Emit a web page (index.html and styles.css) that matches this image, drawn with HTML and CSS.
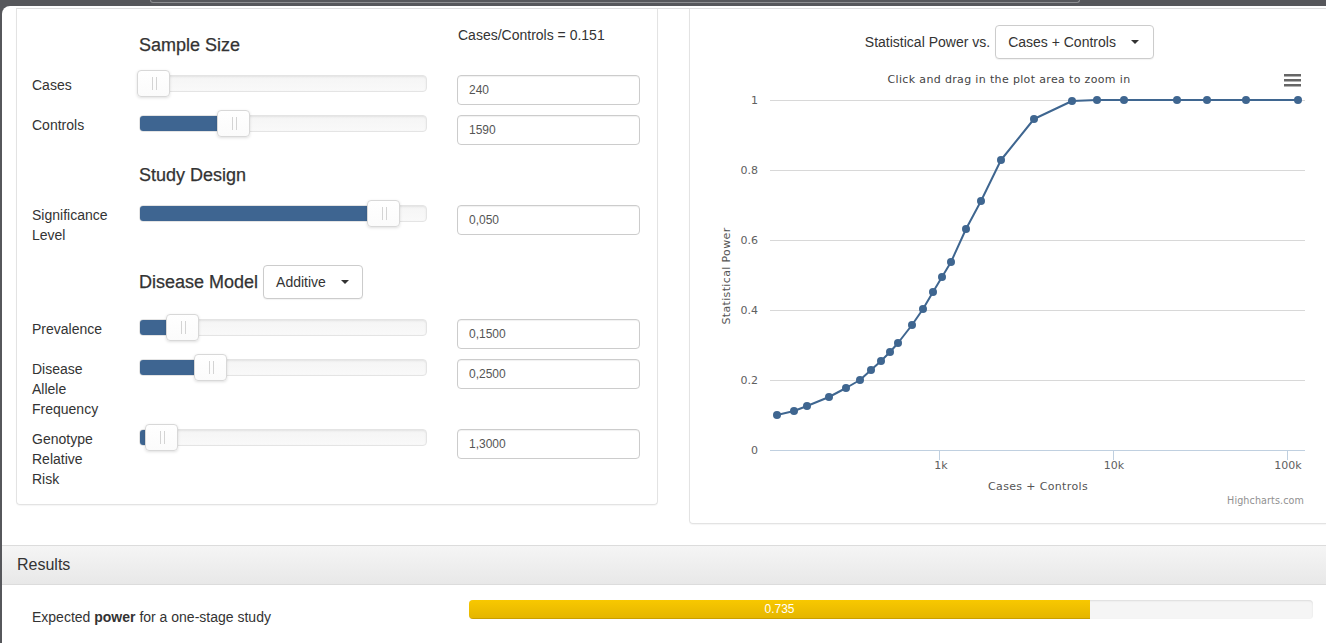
FILE: index.html
```html
<!DOCTYPE html>
<html lang="en">
<head>
<meta charset="utf-8">
<title>Power Calculator</title>
<link rel="stylesheet" href="styles.css">
</head>
<body>
<div class="chrome"><div class="chrome-tab"></div></div>
<div class="viewport">
  <div class="panels">
    <div class="well">
      <div class="head-row first">
        <h4 class="section-title">Sample Size</h4>
        <div class="ratio">Cases/Controls = 0.151</div>
      </div>
      <div class="row">
        <div class="lbl">Cases</div>
        <div class="slider"><div class="track"><div class="fill" style="width:10px"></div><div class="handle" style="left:-3px"></div></div></div>
        <input class="val" type="text" value="240" readonly>
      </div>
      <div class="row">
        <div class="lbl">Controls</div>
        <div class="slider"><div class="track"><div class="fill" style="width:93px"></div><div class="handle" style="left:77px"></div></div></div>
        <input class="val" type="text" value="1590" readonly>
      </div>

      <div class="head-row">
        <h4 class="section-title">Study Design</h4>
      </div>
      <div class="row">
        <div class="lbl">Significance Level</div>
        <div class="slider"><div class="track"><div class="fill" style="width:243px"></div><div class="handle" style="left:227px"></div></div></div>
        <input class="val" type="text" value="0,050" readonly>
      </div>

      <div class="head-row model">
        <div class="title-with-select">
          <h4 class="section-title">Disease Model</h4>
          <button class="select small" type="button">Additive <span class="caret"></span></button>
        </div>
      </div>
      <div class="row">
        <div class="lbl">Prevalence</div>
        <div class="slider"><div class="track"><div class="fill" style="width:42px"></div><div class="handle" style="left:26px"></div></div></div>
        <input class="val" type="text" value="0,1500" readonly>
      </div>
      <div class="row">
        <div class="lbl">Disease Allele Frequency</div>
        <div class="slider"><div class="track"><div class="fill" style="width:70px"></div><div class="handle" style="left:54px"></div></div></div>
        <input class="val" type="text" value="0,2500" readonly>
      </div>
      <div class="row">
        <div class="lbl">Genotype Relative Risk</div>
        <div class="slider"><div class="track"><div class="fill" style="width:21px"></div><div class="handle" style="left:5px"></div></div></div>
        <input class="val" type="text" value="1,3000" readonly>
      </div>
    </div>

    <div class="plot-panel">
      <div class="plot-head">
        <span class="plot-label">Statistical Power vs.</span>
        <button class="select wide" type="button">Cases + Controls <span class="caret"></span></button>
      </div>
      <svg class="chart" width="639" height="464" viewBox="690 59 639 464" xmlns="http://www.w3.org/2000/svg">
        <text class="subtitle" x="1009" y="83" text-anchor="middle">Click and drag in the plot area to zoom in</text>
        <g fill="#666">
          <rect x="1284" y="74" width="17" height="2.5"/>
          <rect x="1284" y="79" width="17" height="2.5"/>
          <rect x="1284" y="84" width="17" height="2.5"/>
        </g>
        <g stroke="#d8d8d8" stroke-width="1">
          <line x1="770" y1="100.5" x2="1305" y2="100.5"/>
          <line x1="770" y1="170.5" x2="1305" y2="170.5"/>
          <line x1="770" y1="240.5" x2="1305" y2="240.5"/>
          <line x1="770" y1="310.5" x2="1305" y2="310.5"/>
          <line x1="770" y1="380.5" x2="1305" y2="380.5"/>
        </g>
        <g stroke="#c0d0e0" stroke-width="1">
          <line x1="770" y1="450.5" x2="1305" y2="450.5"/>
          <line x1="939.5" y1="450" x2="939.5" y2="460"/>
          <line x1="1113.5" y1="450" x2="1113.5" y2="460"/>
          <line x1="1287.5" y1="450" x2="1287.5" y2="460"/>
        </g>
        <g class="axis-label" text-anchor="end">
          <text x="758" y="104">1</text>
          <text x="758" y="174">0.8</text>
          <text x="758" y="244">0.6</text>
          <text x="758" y="314">0.4</text>
          <text x="758" y="384">0.2</text>
          <text x="758" y="454">0</text>
        </g>
        <g class="axis-label" text-anchor="middle">
          <text x="941" y="469">1k</text>
          <text x="1114" y="469">10k</text>
          <text x="1288" y="469">100k</text>
        </g>
        <text class="axis-title" x="1038" y="490" text-anchor="middle">Cases + Controls</text>
        <text class="axis-title" transform="translate(730 276) rotate(-90)" text-anchor="middle">Statistical Power</text>
        <text class="credits" x="1304" y="504" text-anchor="end">Highcharts.com</text>
        <polyline fill="none" stroke="#3f6690" stroke-width="2" stroke-linejoin="round"
          points="777,415 794,411 807,406 829,397 846,388 860,380 871,370 881,361 890,352 898,343 912,325 923,309 933,292 942,277 951,262 966,229 981,201 1001,160 1034,119 1072,101 1097,100 1124,100 1177,100 1207,100 1246,100 1298,100"/>
        <g fill="#3f6690">
          <circle cx="777" cy="415" r="4"/><circle cx="794" cy="411" r="4"/><circle cx="807" cy="406" r="4"/>
          <circle cx="829" cy="397" r="4"/><circle cx="846" cy="388" r="4"/><circle cx="860" cy="380" r="4"/>
          <circle cx="871" cy="370" r="4"/><circle cx="881" cy="361" r="4"/><circle cx="890" cy="352" r="4"/>
          <circle cx="898" cy="343" r="4"/><circle cx="912" cy="325" r="4"/><circle cx="923" cy="309" r="4"/>
          <circle cx="933" cy="292" r="4"/><circle cx="942" cy="277" r="4"/><circle cx="951" cy="262" r="4"/>
          <circle cx="966" cy="229" r="4"/><circle cx="981" cy="201" r="4"/><circle cx="1001" cy="160" r="4"/>
          <circle cx="1034" cy="119" r="4"/><circle cx="1072" cy="101" r="4"/><circle cx="1097" cy="100" r="4"/>
          <circle cx="1124" cy="100" r="4"/><circle cx="1177" cy="100" r="4"/><circle cx="1207" cy="100" r="4"/>
          <circle cx="1246" cy="100" r="4"/><circle cx="1298" cy="100" r="4"/>
        </g>
      </svg>
    </div>
  </div>

  <div class="results">
    <div class="results-head">Results</div>
    <div class="results-body">
      <div class="res-label">Expected <b>power</b> for a one-stage study</div>
      <div class="progress"><div class="progress-bar" style="width:621px">0.735</div></div>
    </div>
  </div>
</div>
</body>
</html>
```

FILE: styles.css
```css
* { box-sizing: border-box; }

html, body {
  margin: 0;
  padding: 0;
}

body {
  width: 1326px;
  height: 643px;
  overflow: hidden;
  background: #56575b;
  font-family: "Liberation Sans", Arial, sans-serif;
  font-size: 14px;
  color: #333;
}

.chrome {
  height: 6px;
}

.chrome-tab {
  margin-left: 150px;
  width: 930px;
  height: 3px;
  border: 1px solid #8d8e91;
  border-top: none;
  border-radius: 0 0 4px 4px;
}

.viewport {
  margin-left: 2px;
  height: 637px;
  background: #fff;
  border-top-left-radius: 8px;
  overflow: hidden;
}

.panels {
  display: flex;
  align-items: flex-start;
  gap: 31px;
  margin: 2px 0 0 14px;
  border-top: 1px solid #dedede;
}

/* left well */
.well {
  flex: none;
  width: 642px;
  border: 1px solid #e3e3e3;
  border-top: none;
  border-radius: 0 0 4px 4px;
  padding: 0 16px 15px 15px;
  box-shadow: 0 1px 1px rgba(0, 0, 0, .04);
}

.head-row {
  display: grid;
  grid-template-columns: 107px 318px 183px;
  padding-top: 20px;
}

.head-row.first {
  padding-top: 16px;
}

.section-title {
  grid-column: 2;
  margin: 0;
  font-size: 18px;
  font-weight: 500;
  line-height: 20px;
  color: #333;
  -webkit-text-stroke: 0.25px #333;
}

.head-row.first .section-title {
  margin-top: 10px;
  grid-row: 1;
}

.ratio {
  grid-column: 3;
  grid-row: 1;
  line-height: 20px;
  padding-left: 1px;
}

.title-with-select {
  grid-column: 2 / 4;
  display: flex;
  align-items: center;
  gap: 5px;
  height: 34px;
}

.row {
  display: grid;
  grid-template-columns: 107px 318px 183px;
  align-items: start;
  margin-top: 10px;
}

.head-row + .row {
  margin-top: 20px;
}

.lbl {
  line-height: 20px;
  padding-right: 29px;
}

/* slider */
.slider {
  width: 288px;
}

.track {
  position: relative;
  height: 17px;
  border: 1px solid #e4e4e4;
  border-radius: 4px;
  background: linear-gradient(#f5f5f5, #f9f9f9);
  box-shadow: inset 0 1px 2px rgba(0, 0, 0, .08);
}

.fill {
  height: 100%;
  background: #3e6591;
  border-radius: 3px 0 0 3px;
}

.handle {
  position: absolute;
  top: -6px;
  width: 33px;
  height: 27px;
  background: linear-gradient(#fff, #fbfbfb);
  border: 1px solid #d8d8d8;
  border-radius: 4px;
  box-shadow: 0 1px 3px rgba(0, 0, 0, .13);
}

.handle::before {
  content: "";
  position: absolute;
  left: 14px;
  top: 6px;
  width: 3px;
  height: 13px;
  border-left: 1px solid #d4d4d4;
  border-right: 1px solid #d4d4d4;
}

/* inputs */
.val {
  display: block;
  width: 183px;
  height: 30px;
  margin: 0;
  padding: 0 11px;
  border: 1px solid #ccc;
  border-radius: 4px;
  background: #fff;
  font-family: inherit;
  font-size: 12px;
  color: #555;
  box-shadow: inset 0 1px 1px rgba(0, 0, 0, .06);
  outline: none;
}

/* dropdown buttons */
.select {
  display: flex;
  align-items: center;
  justify-content: space-between;
  height: 34px;
  margin: 0;
  padding: 0 13px 0 12px;
  border: 1px solid #ccc;
  border-radius: 4px;
  background: #fff;
  font-family: inherit;
  font-size: 14px;
  color: #333;
  box-shadow: 0 1px 1px rgba(0, 0, 0, .05);
}

.select.small {
  width: 100px;
}

.select.wide {
  width: 159px;
  padding-right: 14px;
}

.caret {
  width: 0;
  height: 0;
  border-top: 4px solid #333;
  border-left: 4px solid transparent;
  border-right: 4px solid transparent;
}

/* plot panel */
.plot-panel {
  flex: none;
  width: 641px;
  border: 1px solid #e3e3e3;
  border-top: none;
  border-radius: 0 0 4px 4px;
  box-shadow: 0 1px 1px rgba(0, 0, 0, .04);
}

.plot-head {
  display: flex;
  justify-content: center;
  align-items: center;
  gap: 5px;
  height: 50px;
  padding-top: 16px;
}

.plot-label {
  line-height: 20px;
}

.chart {
  display: block;
  font-family: "DejaVu Sans", Verdana, sans-serif;
}

.subtitle {
  font-size: 11px;
  letter-spacing: 0.35px;
  fill: #444;
}

.axis-label {
  font-size: 11px;
  fill: #606060;
}

.axis-title {
  font-size: 11px;
  letter-spacing: 0.35px;
  fill: #555;
}

.credits {
  font-size: 9.6px;
  letter-spacing: 0.1px;
  fill: #909090;
}

/* results */
.results {
  margin-top: 21px;
  border-top: 1px solid #dcdcdc;
}

.results-head {
  height: 39px;
  padding-left: 15px;
  line-height: 38px;
  font-size: 16px;
  color: #333;
  background: linear-gradient(#f5f5f5, #e8e8e8);
  border-bottom: 1px solid #dcdcdc;
}

.results-body {
  display: grid;
  grid-template-columns: 437px 844px;
  align-items: start;
  padding: 15px 0 0 30px;
}

.res-label {
  margin-top: 7px;
  line-height: 20px;
  font-size: 14px;
}

.progress {
  height: 19px;
  border-radius: 4px;
  background: #f5f5f5;
  box-shadow: inset 0 1px 2px rgba(0, 0, 0, .1);
  overflow: hidden;
}

.progress-bar {
  height: 100%;
  background: linear-gradient(#f8c800, #e5b600);
  border-bottom: 1px solid #c99f00;
  color: #fff;
  font-size: 12px;
  line-height: 18px;
  text-align: center;
}
```
